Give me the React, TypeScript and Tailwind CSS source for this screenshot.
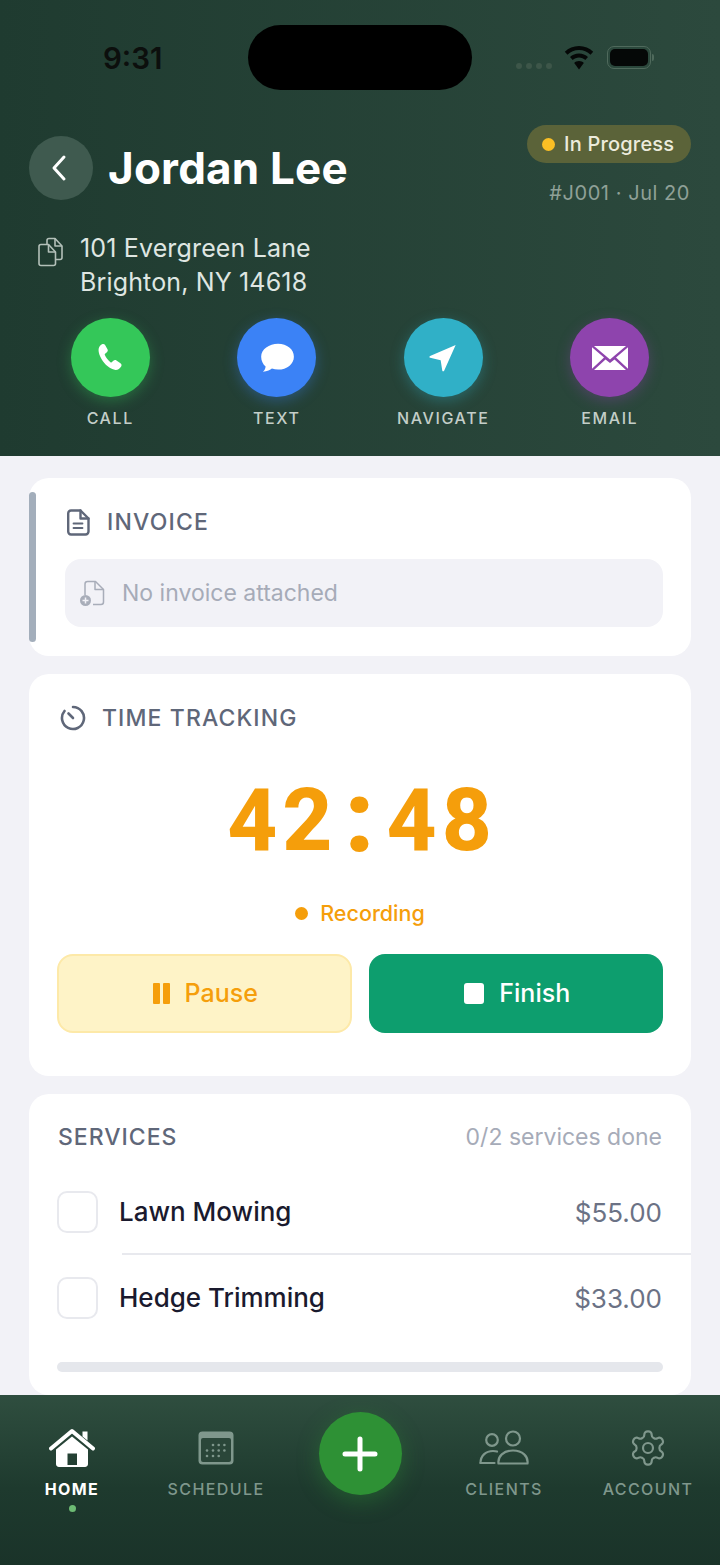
import type { ReactNode } from 'react'

const font = { fontFamily: 'Inter, "Liberation Sans", sans-serif' }

function PhoneIcon() {
  return (
    <svg width="36" height="36" viewBox="0 0 30 30" fill="white">
      <path d="M8.3 3.6c1-.6 2-.4 2.600.6l2 3.600c.5.9.3 1.800-.5 2.500l-1.500 1.200c-.3.3-.4.600-.2 1 1 2.300 2.500 4.300 4.700 6 .4.300.7.300 1 0l1.400-1.200c.8-.7 1.700-.8 2.600-.2l3.300 2.200c1 .7 1.200 1.700.6 2.700-1 1.700-2.700 3-4.700 2.900-3.500-.2-7.400-2.900-10.500-7.100C6.500 13.900 5 9.800 5.600 7.100c.3-1.500 1.400-2.700 2.700-3.500z" />
    </svg>
  )
}

function BubbleIcon() {
  return (
    <svg width="38" height="31" viewBox="0 0 36 36" preserveAspectRatio="none" fill="white">
      <path d="M19 2c8.500 0 15 6.500 15 15s-6.500 15-15 15c-2 0-4-.4-5.800-1.100-1.600 1.300-4.200 3.400-8.700 3.600 1.800-1.500 2.500-3.300 2.700-6C4.800 25.800 3 21.700 3 17 3 8.500 10.500 2 19 2z" />
    </svg>
  )
}

function NavigateIcon() {
  return (
    <svg width="30" height="30" viewBox="0 0 32 32" fill="white">
      <path d="M29.500 2 17.200 29.500c-.5 1-1.800.8-2-.3L13.500 18.500 2.300 15.800c-1-.3-1.100-1.600-.1-2z" />
    </svg>
  )
}

function MailIcon() {
  return (
    <svg width="36" height="26" viewBox="0 0 36 28" preserveAspectRatio="none" fill="white">
      <path d="M2 1h32L18 15.500z" />
      <path d="M0 2.500v23l12-12zM36 2.500v23L24 13.500z" />
      <path d="M13.500 15.500l4.500 4 4.500-4L34 27H2z" />
    </svg>
  )
}

function ActionButton({ label, color, glow, icon }: { label: string; color: string; glow: string; icon: ReactNode }) {
  return (
    <div className="flex flex-col items-center">
      <div className={`flex h-[79px] w-[79px] items-center justify-center rounded-full ${color} ${glow}`}>
        {icon}
      </div>
      <span className="mt-[11px] text-[16px] leading-[20px] font-medium tracking-[1.600px] text-[#c3cec8]">
        {label}
      </span>
    </div>
  )
}

function CopyIcon() {
  return (
    <svg width="26" height="30" viewBox="0 0 26 30" fill="none" stroke="#b3c0b9" strokeWidth="1.600" strokeLinejoin="round">
      <path d="M9 7V3.500C9 2.400 9.800 1.500 11 1.500h6l7 7.500v11.500c0 1.100-.9 2-2 2h-4" />
      <path d="M17 1.500V9h7" />
      <path d="M3 7.500h7.500l7 7.500v11.500c0 1.100-.9 2-2 2H3c-1.100 0-2-.9-2-2v-17c0-1.100.9-2 2-2z" />
      <path d="M10.500 7.500V15h7" />
    </svg>
  )
}

function InvoiceIcon() {
  return (
    <svg width="23" height="27" viewBox="0 0 23 27" fill="none" stroke="#5f6779" strokeWidth="2.400" strokeLinejoin="round" strokeLinecap="round">
      <path d="M4 1.500h9.500l8 8V22.500c0 1.600-1.300 3-3 3H4c-1.600 0-2.800-1.400-2.800-3V4.500C1.200 2.900 2.400 1.500 4 1.500z" />
      <path d="M13.500 1.500v8h8" />
      <path d="M6.500 14.500h9M6.500 19h9" strokeWidth="1.800" />
    </svg>
  )
}

function AttachIcon() {
  return (
    <svg width="26" height="27" viewBox="0 0 26 27" fill="none">
      <path d="M6 15V4c0-1.400 1-2.500 2.500-2.500h8L24.500 9.500v12.500c0 1.400-1 2.500-2.500 2.500H14" stroke="#a8adb9" strokeWidth="1.500" strokeLinejoin="round" />
      <path d="M16 1.500v8h8.500" stroke="#a8adb9" strokeWidth="1.500" strokeLinejoin="round" />
      <circle cx="6.500" cy="20.500" r="5.500" fill="#a8adb9" />
      <path d="M6.500 17.500v6M3.500 20.500h6" stroke="#f2f2f7" strokeWidth="1.500" />
    </svg>
  )
}

function TimerIcon() {
  return (
    <svg width="26" height="26" viewBox="0 0 26 26" fill="none" stroke="#5f6779" strokeWidth="2.600" strokeLinecap="round">
      <path d="M13 2a11 11 0 1 1-8.500 4" />
      <path d="M8.500 8.500l4.500 4.500" />
    </svg>
  )
}

function ServiceRow({ name, price }: { name: string; price: string }) {
  return (
    <div className="flex h-[42px] items-center">
      <div className="h-[42px] w-[41px] rounded-[10px] border-2 border-[#e8e9ee]" />
      <span className="ml-[21px] -translate-y-[1px] text-[26px] font-medium text-[#1a1a2e]">{name}</span>
      <span className="ml-auto pr-px text-[26px] text-[#6b7285]">{price}</span>
    </div>
  )
}

function HomeIcon() {
  return (
    <svg width="46" height="40" viewBox="0 0 46 40" fill="white">
      <path d="M2 20.500 23 3l21 17.500" fill="none" stroke="white" strokeWidth="4" strokeLinecap="round" strokeLinejoin="round" />
      <path d="M33.500 3.500h5v9l-5-4z" />
      <path fillRule="evenodd" d="M23 8.500 39 21.500V36c0 1.600-1.200 3-3 3H10c-1.800 0-3-1.400-3-3V21.500zM18.500 25.500V37h9.500V25.500z" />
    </svg>
  )
}

function CalendarIcon() {
  const dots = [
    [15, 14], [20.700, 14], [26.400, 14],
    [9, 19.500], [15, 19.500], [20.700, 19.500], [26.400, 19.500],
    [9, 25], [15, 25], [20.700, 25],
  ]
  return (
    <svg width="36" height="34" viewBox="0 0 36 34" fill="none">
      <rect x="0.500" y="0.500" width="35" height="33" rx="4" fill="#7f978c" />
      <rect x="3" y="7" width="30" height="24" rx="2" fill="#2a4639" />
      {dots.map(([x, y]) => (
        <circle key={`${x}-${y}`} cx={x} cy={y} r="1.300" fill="#7f978c" />
      ))}
    </svg>
  )
}

function ClientsIcon() {
  return (
    <svg width="50" height="36" viewBox="0 0 50 36" fill="none" stroke="#7f978c" strokeWidth="2.200">
      <circle cx="13" cy="10" r="5.800" />
      <circle cx="34" cy="8.500" r="7" />
      <path d="M1.500 33c0-7 5-12 12.500-12 1.500 0 3 .2 4 .6" strokeLinecap="round" />
      <path d="M1.500 33h14" strokeLinecap="round" />
      <path d="M19.500 33.500c-1-7 5-13 14.500-13s15.500 6 14.500 13z" strokeLinejoin="round" />
    </svg>
  )
}

function GearIcon() {
  return (
    <svg width="40" height="40" viewBox="0 0 24 24" fill="none" stroke="#7f978c" strokeWidth="1.300" strokeLinecap="round" strokeLinejoin="round">
      <path d="M12.220 2h-.44a2 2 0 0 0-2 2v.18a2 2 0 0 1-1 1.730l-.43.25a2 2 0 0 1-2 0l-.15-.08a2 2 0 0 0-2.730.73l-.22.38a2 2 0 0 0 .73 2.730l.15.1a2 2 0 0 1 1 1.720v.51a2 2 0 0 1-1 1.740l-.15.09a2 2 0 0 0-.73 2.730l.22.38a2 2 0 0 0 2.730.73l.15-.08a2 2 0 0 1 2 0l.43.25a2 2 0 0 1 1 1.730V20a2 2 0 0 0 2 2h.44a2 2 0 0 0 2-2v-.18a2 2 0 0 1 1-1.730l.43-.25a2 2 0 0 1 2 0l.15.08a2 2 0 0 0 2.730-.73l.22-.39a2 2 0 0 0-.73-2.730l-.15-.08a2 2 0 0 1-1-1.740v-.5a2 2 0 0 1 1-1.740l.15-.09a2 2 0 0 0 .73-2.730l-.22-.38a2 2 0 0 0-2.730-.73l-.15.08a2 2 0 0 1-2 0l-.43-.25a2 2 0 0 1-1-1.730V4a2 2 0 0 0-2-2z" />
      <circle cx="12" cy="12" r="3" />
    </svg>
  )
}

function NavItem({ label, icon, active }: { label: string; icon: ReactNode; active?: boolean }) {
  return (
    <div className="flex w-[144px] flex-col items-center">
      <div className="flex h-[44px] items-center justify-center">{icon}</div>
      <span
        className={`mt-[9px] text-[16px] leading-[20px] tracking-[1.400px] ${
          active ? 'font-bold text-white' : 'font-medium text-[#7f978c]'
        }`}
      >
        {label}
      </span>
      {active && <div className="mt-[6px] h-[7px] w-[7px] rounded-full bg-[#6dbb74]" />}
    </div>
  )
}

export default function App() {
  return (
    <div style={font} className="flex h-[1565px] w-[720px] flex-col overflow-hidden bg-[#f2f2f7]">
      <header className="h-[456px] shrink-0 bg-gradient-to-r from-[#1f3b30] to-[#2c493d]">
        <div className="mt-[25px] flex h-[65px] items-center pl-[103px]">
          <span className="w-[145px] pt-[2px] text-[29.500px] font-semibold text-[#0c0f0d]">9:31</span>
          <div className="h-[65px] w-[224px] rounded-[33px] bg-black" />
          <div className="mt-[17px] ml-[44px] flex w-[36px] justify-between">
            <span className="h-[6px] w-[6px] rounded-full bg-[#3d5649]" />
            <span className="h-[6px] w-[6px] rounded-full bg-[#3d5649]" />
            <span className="h-[6px] w-[6px] rounded-full bg-[#3d5649]" />
            <span className="h-[6px] w-[6px] rounded-full bg-[#3d5649]" />
          </div>
          <svg className="ml-[12px]" width="30" height="24" viewBox="0 0 30 24" fill="#050807">
            <path d="M15 0C9.500 0 4.500 2.200.8 5.700l2.700 3C6.500 5.800 10.500 4 15 4s8.500 1.800 11.500 4.700l2.700-3C25.500 2.200 20.500 0 15 0z" />
            <path d="M15 7.500c-3.500 0-6.700 1.400-9 3.600l2.700 3c1.600-1.600 3.900-2.600 6.300-2.600s4.700 1 6.300 2.600l2.700-3c-2.300-2.200-5.500-3.600-9-3.600z" />
            <path d="M15 15c-1.900 0-3.600.7-4.800 1.900L15 23.500l4.800-6.600C18.600 15.700 16.900 15 15 15z" />
          </svg>
          <div className="ml-[13px] flex items-center">
            <div className="flex h-[23px] w-[44px] items-center justify-center rounded-[7px] border border-[#4f6a5c]">
              <div className="h-[17px] w-[38px] rounded-[5px] bg-[#050807]" />
            </div>
            <div className="ml-px h-[7px] w-[2px] rounded-r bg-[#4f6a5c]" />
          </div>
        </div>

        <div className="mt-[35px] flex items-start justify-between px-[29px]">
          <div className="mt-[11px] flex h-[64px] items-center">
            <div className="flex h-[64px] w-[64px] items-center justify-center rounded-full bg-[#3f5a4f]">
              <svg className="-ml-[4px]" width="20" height="28" viewBox="0 0 20 28" fill="none" stroke="white" strokeWidth="3" strokeLinecap="round" strokeLinejoin="round">
                <path d="M15 3 5 14l10 11" />
              </svg>
            </div>
            <h1 className="ml-[15px] text-[44px] tracking-[0.200px] font-bold text-white">Jordan Lee</h1>
          </div>
          <div className="flex flex-col items-end">
            <div className="flex h-[38px] w-[164px] items-center rounded-full bg-[#5b6339] pl-[15px]">
              <span className="h-[13px] w-[13px] rounded-full bg-[#fbbf24]" />
              <span className="ml-[9px] text-[20px] font-medium tracking-[0.200px] text-[#ecebdc]">In Progress</span>
            </div>
            <span className="mt-[18px] pr-px text-[20px] leading-[24px] tracking-[0.550px] text-[#8fa097]">#J001 · Jul 20</span>
          </div>
        </div>

        <div className="mt-[26px] flex pl-[38px]">
          <div className="mt-[6px]">
            <CopyIcon />
          </div>
          <p className="ml-[16px] text-[25px] leading-[34px] tracking-[0.150px] text-[#dfe6e2]">
            101 Evergreen Lane
            <br />
            Brighton, NY 14618
          </p>
        </div>

        <div className="mt-[19px] grid grid-cols-4 px-[27px]">
          <ActionButton label="CALL" color="bg-[#34c759]" glow="shadow-[0_4px_14px_rgba(52,199,89,0.35)]" icon={<PhoneIcon />} />
          <ActionButton label="TEXT" color="bg-[#3b82f6]" glow="shadow-[0_4px_14px_rgba(59,130,246,0.35)]" icon={<BubbleIcon />} />
          <ActionButton label="NAVIGATE" color="bg-[#30b0c7]" glow="shadow-[0_4px_14px_rgba(48,176,199,0.35)]" icon={<NavigateIcon />} />
          <ActionButton label="EMAIL" color="bg-[#8e44ad]" glow="shadow-[0_4px_14px_rgba(142,68,173,0.35)]" icon={<MailIcon />} />
        </div>
      </header>

      <main className="flex min-h-0 flex-1 flex-col gap-[18px] overflow-hidden px-[29px] pt-[22px]">
        <section className="relative h-[178px] shrink-0 rounded-[20px] bg-white pt-[31px] pr-[28px] pl-[36px]">
          <div className="absolute top-[14px] left-0 h-[150px] w-[7px] rounded-full bg-[#a3aebb]" />
          <div className="flex h-[26px] items-center pl-[2px]">
            <InvoiceIcon />
            <span className="ml-[17px] text-[23px] font-medium tracking-[1.200px] text-[#5f6779]">INVOICE</span>
          </div>
          <div className="mt-[24px] flex h-[68px] items-center rounded-[16px] bg-[#f2f2f7] pl-[14px]">
            <AttachIcon />
            <span className="ml-[17px] text-[23px] text-[#a6abb8]">No invoice attached</span>
          </div>
        </section>

        <section className="h-[402px] shrink-0 rounded-[20px] bg-white px-[28px] pt-[31px]">
          <div className="flex h-[26px] items-center pl-[3px]">
            <TimerIcon />
            <span className="ml-[16px] text-[23px] font-medium tracking-[1.100px] text-[#5f6779]">TIME TRACKING</span>
          </div>
          <div
            style={{ fontFamily: 'Roboto, sans-serif' }}
            className="mt-[44px] flex h-[90px] items-center justify-center pl-[4px] text-[87px] font-extrabold tracking-[5px] text-[#f59e0b]"
          >
            <span>42</span>
            <span className="mx-[7px] -translate-y-[3px] text-[100px] font-black">:</span>
            <span>48</span>
          </div>
          <div className="mt-[36px] flex h-[24px] items-center justify-center">
            <span className="h-[13px] w-[13px] rounded-full bg-[#f59e0b]" />
            <span className="ml-[12px] text-[21.500px] font-medium text-[#f59e0b]">Recording</span>
          </div>
          <div className="mt-[29px] grid grid-cols-2 gap-[17px]">
            <div className="flex h-[79px] items-center justify-center rounded-[16px] border-2 border-[#fde9a8] bg-[#fef3c7] pl-[2px]">
              <div className="flex gap-[3px]">
                <span className="h-[21px] w-[7px] rounded-[1px] bg-[#f59e0b]" />
                <span className="h-[21px] w-[7px] rounded-[1px] bg-[#f59e0b]" />
              </div>
              <span className="ml-[15px] text-[25px] font-medium text-[#f59e0b]">Pause</span>
            </div>
            <div className="flex h-[79px] items-center justify-center rounded-[16px] bg-[#0d9e6e] pl-[3px]">
              <span className="h-[21px] w-[20px] rounded-[3px] bg-white" />
              <span className="ml-[15px] text-[25px] font-medium text-white">Finish</span>
            </div>
          </div>
        </section>

        <section className="shrink-0 rounded-[20px] bg-white pt-[30px] pb-[23px]">
          <div className="flex h-[26px] items-center justify-between px-[29px]">
            <span className="text-[23px] font-medium tracking-[1px] text-[#5f6779]">SERVICES</span>
            <span className="text-[23px] text-[#a6abb8]">0/2 services done</span>
          </div>
          <div className="mt-[41px] px-[28px]">
            <ServiceRow name="Lawn Mowing" price="$55.00" />
          </div>
          <div className="mt-[20px] ml-[93px] h-[2px] bg-[#e8e9ee]" />
          <div className="mt-[22px] px-[28px]">
            <ServiceRow name="Hedge Trimming" price="$33.00" />
          </div>
          <div className="mx-[28px] mt-[43px] h-[10px] rounded-full bg-[#e5e7ec]" />
        </section>
      </main>

      <nav className="flex h-[170px] shrink-0 bg-[linear-gradient(to_bottom,#2f4e3f_0%,#1e3a2e_55%,#1a3329_100%)] pt-[31px]">
        <NavItem label="HOME" icon={<HomeIcon />} active />
        <NavItem label="SCHEDULE" icon={<CalendarIcon />} />
        <div className="flex w-[144px] justify-center">
          <div className="-mt-[14px] flex h-[83px] w-[83px] items-center justify-center rounded-full bg-[#2e9135] shadow-[0_6px_22px_rgba(46,145,53,0.4)]">
            <svg width="36" height="36" viewBox="0 0 36 36" stroke="white" strokeWidth="5" strokeLinecap="round">
              <path d="M18 3v30M3 18h30" />
            </svg>
          </div>
        </div>
        <NavItem label="CLIENTS" icon={<ClientsIcon />} />
        <NavItem label="ACCOUNT" icon={<GearIcon />} />
      </nav>
    </div>
  )
}
